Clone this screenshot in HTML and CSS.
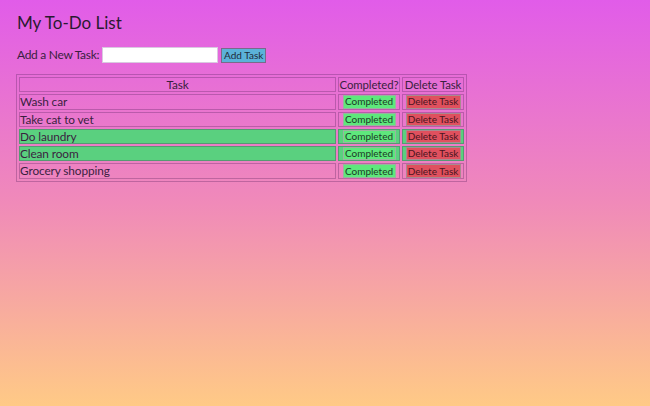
FILE: index.html
```html
<!DOCTYPE html>
<html>
<head>
<meta charset="utf-8">
<title>My To-Do List</title>
<link rel="stylesheet" href="styles.css">
</head>
<body>
<div class="page">
  <h1 class="title">My To-Do List</h1>
  <form class="add-form">
    <label class="add-label" for="task">Add a New Task:</label>
    <input class="add-input" id="task" type="text">
    <button class="add-btn" type="button">Add Task</button>
  </form>
  <table class="tasks">
    <thead>
      <tr><th class="col-task">Task</th><th class="col-act">Completed?</th><th class="col-act">Delete Task</th></tr>
    </thead>
    <tbody>
      <tr><td class="name">Wash car</td><td class="act"><button class="btn-done">Completed</button></td><td class="act"><button class="btn-del">Delete Task</button></td></tr>
      <tr><td class="name">Take cat to vet</td><td class="act"><button class="btn-done">Completed</button></td><td class="act"><button class="btn-del">Delete Task</button></td></tr>
      <tr class="done"><td class="name">Do laundry</td><td class="act"><button class="btn-done">Completed</button></td><td class="act"><button class="btn-del">Delete Task</button></td></tr>
      <tr class="done"><td class="name">Clean room</td><td class="act"><button class="btn-done">Completed</button></td><td class="act"><button class="btn-del">Delete Task</button></td></tr>
      <tr><td class="name">Grocery shopping</td><td class="act"><button class="btn-done">Completed</button></td><td class="act"><button class="btn-del">Delete Task</button></td></tr>
    </tbody>
  </table>
</div>
</body>
</html>
```
FILE: styles.css
```css
html, body {
  margin: 0;
  height: 100%;
}
body {
  background: linear-gradient(to bottom, #e15ce9 0%, #f08ab9 50%, #ffca86 100%);
  font-family: Lato, "Noto Sans", sans-serif;
  color: #3a1f3f;
}
.page {
  padding: 12px 16px;
}
.title {
  font-size: 17px;
  font-weight: 400;
  margin: 0 0 12px 1px;
  line-height: 22px;
  color: #2a1a30;
}
.add-form {
  display: flex;
  align-items: center;
  height: 17px;
  margin: 0 0 11px 1px;
  font-size: 12px;
  letter-spacing: -0.3px;
}
.add-label {
  margin-right: 3px;
  white-space: nowrap;
}
.add-input {
  width: 116px;
  height: 16px;
  box-sizing: border-box;
  border: 1px solid #d9c9e0;
  padding: 1px 2px;
  margin: 0 3px 0 0;
  background: #fff;
}
.add-btn {
  font-family: inherit;
  font-size: 10px;
  letter-spacing: 0;
  white-space: nowrap;
  background: #5bb2d9;
  border: 1px solid #7a6a8a;
  color: #1e2a3a;
  padding: 0;
  width: 45px;
  height: 15px;
  line-height: 13px;
  margin-top: 2px;
}
.tasks {
  border: 1px solid rgba(80, 30, 90, 0.3);
  border-spacing: 2px;
  font-size: 11.8px;
  letter-spacing: -0.1px;
}
.tasks th,
.tasks td {
  border: 1px solid rgba(80, 30, 90, 0.3);
  padding: 0;
  height: 13.3px;
  line-height: 13.3px;
  white-space: nowrap;
}
.tasks th {
  font-weight: 400;
}
.col-task {
  width: 315px;
}
.tasks .col-act {
  width: 60px;
  font-size: 11.4px;
}
.name {
  text-align: left;
}
.act {
  text-align: center;
}
.done td {
  background: #5ad07f;
}
.btn-done,
.btn-del {
  display: block;
  font-family: inherit;
  font-size: 10px;
  letter-spacing: 0;
  white-space: nowrap;
  height: 13.3px;
  line-height: 11px;
  padding: 0;
  margin: 0 auto;
}
.btn-done {
  background: #5ee87c;
  border: 1px solid #9ab3a0;
  color: #1d3a26;
  width: 53px;
}
.btn-del {
  background: #e0505e;
  border: 1px solid #a88a8f;
  color: #4a1520;
  width: 55px;
}
```
